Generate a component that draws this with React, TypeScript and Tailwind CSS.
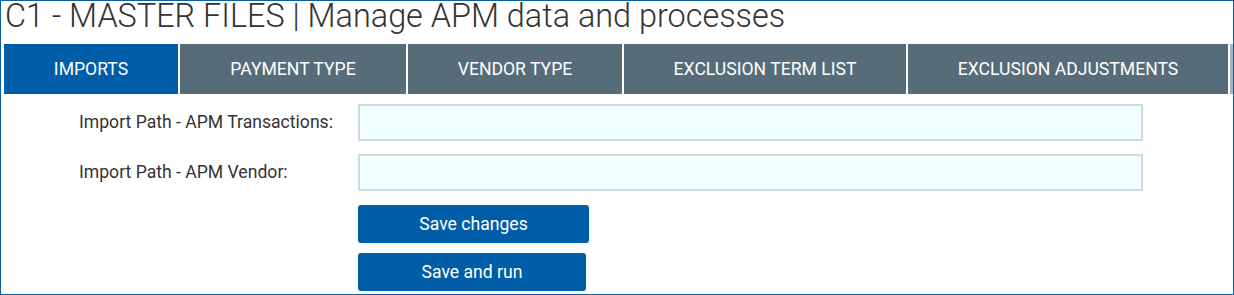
import { useState } from 'react'

const tabs = [
  { label: 'IMPORTS', width: 'w-[174px]' },
  { label: 'PAYMENT TYPE', width: 'w-[226px]' },
  { label: 'VENDOR TYPE', width: 'w-[214px]' },
  { label: 'EXCLUSION TERM LIST', width: 'w-[282px]' },
  { label: 'EXCLUSION ADJUSTMENTS', width: 'w-[320px]' },
]

function Field({ label }: { label: string }) {
  return (
    <div className="flex items-center h-[37px]">
      <div className="w-[357px] shrink-0 pl-[78px] text-[17.6px] text-[#333333] whitespace-nowrap">{label}</div>
      <input
        type="text"
        className="w-[785px] shrink-0 h-[37px] bg-[#f0ffff] border-2 border-[#d0dadf] outline-none px-2"
      />
    </div>
  )
}

export default function App() {
  const [active, setActive] = useState(0)

  return (
    <div className="w-[1234px] h-[295px] border border-[#0a5ea3] overflow-hidden bg-white font-['Roboto',sans-serif]">
      <h1 className="h-[43px] pl-[4px] text-[32.4px] font-light leading-[31px] text-[#333333] whitespace-nowrap">
        C1 - MASTER FILES | Manage APM data and processes
      </h1>

      <div className="flex gap-[2px] pl-[3px] h-[50px]">
        {tabs.map((t, i) => (
          <button
            key={t.label}
            onClick={() => setActive(i)}
            className={`${t.width} shrink-0 h-full flex items-center justify-center text-[17.6px] text-white ${
              i === active ? 'bg-[#005ea8]' : 'bg-[#566d79]'
            }`}
          >
            {t.label}
          </button>
        ))}
        <div className="w-[40px] shrink-0 h-full bg-[#a7b4bd]" />
      </div>

      <div className="flex flex-col pt-[10px] gap-[13px]">
        <Field label="Import Path - APM Transactions:" />
        <Field label="Import Path - APM Vendor:" />
        <div className="flex flex-col gap-[10px] pl-[357px] pt-[1px]">
          <button className="w-[231px] h-[38px] rounded-[3px] bg-[#005ea8] text-white text-[17.6px]">
            Save changes
          </button>
          <button className="w-[228px] h-[38px] rounded-[3px] bg-[#005ea8] text-white text-[17.6px]">
            Save and run
          </button>
        </div>
      </div>
    </div>
  )
}
